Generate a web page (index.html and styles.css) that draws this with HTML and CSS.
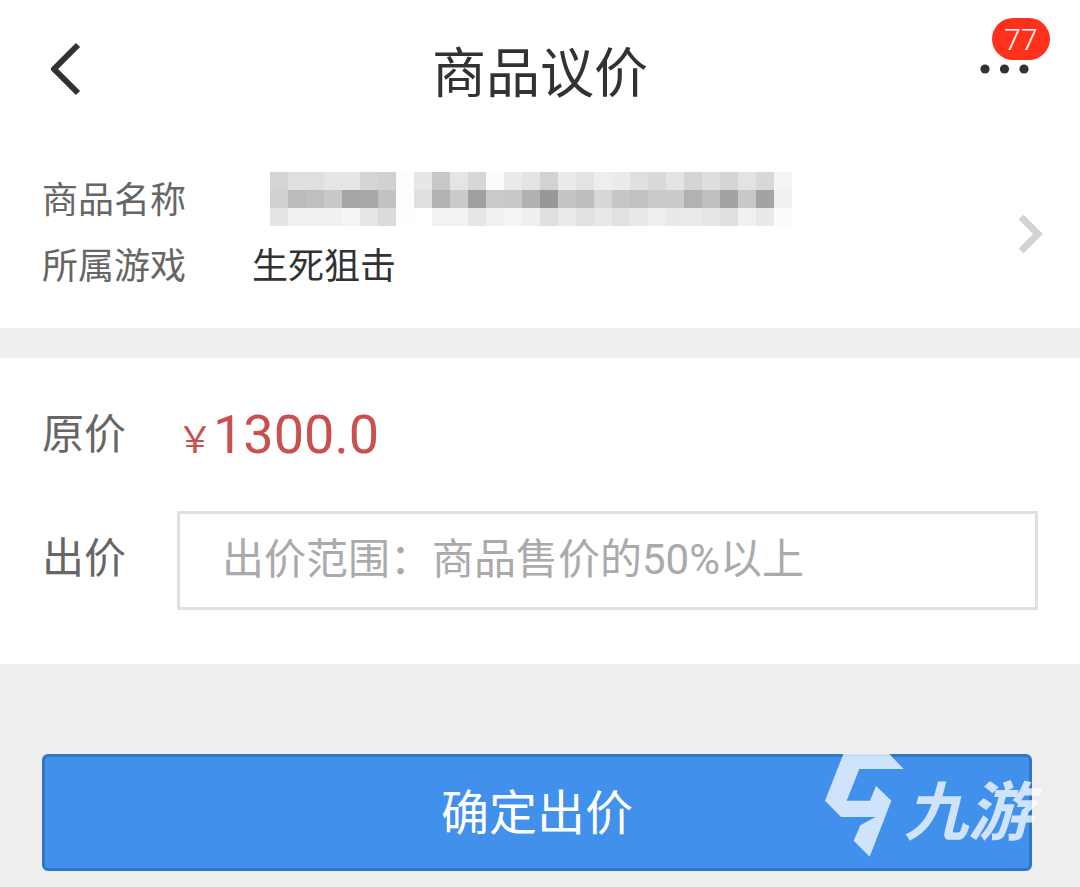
FILE: index.html
```html
<!DOCTYPE html>
<html lang="zh-CN">
<head>
<meta charset="utf-8">
<meta name="viewport" content="width=device-width, initial-scale=1">
<title>商品议价</title>
<link rel="stylesheet" href="styles.css">
</head>
<body>
<header class="topbar">
  <button class="icon-button back" type="button" aria-label="返回">
    <svg width="32" height="54" viewBox="0 0 32 54"><path d="M28 3L4 27L28 51" fill="none" stroke="#303233" stroke-width="6" stroke-linejoin="round"/></svg>
  </button>
  <h1 class="title">商品议价</h1>
  <button class="icon-button more" type="button" aria-label="更多">
    <svg width="50" height="10" viewBox="0 0 50 10" fill="#303233"><circle cx="5" cy="5" r="4.6"/><circle cx="24.500" cy="5" r="4.600"/><circle cx="44" cy="5" r="4.600"/></svg>
    <span class="badge">77</span>
  </button>
</header>
<main class="page">
  <section class="product">
    <dl class="details">
      <dt>商品名称</dt>
      <dd><svg class="mosaic" width="522" height="66" viewBox="0 0 522 66" shape-rendering="crispEdges" aria-hidden="true"></svg></dd>
      <dt>所属游戏</dt>
      <dd>生死狙击</dd>
    </dl>
    <svg class="chevron" width="26" height="40" viewBox="0 0 26 40"><path d="M3 3L20 20L3 37" fill="none" stroke="#d3d3d3" stroke-width="7"/></svg>
  </section>
  <form class="offer" id="offer">
    <div class="row">
      <span class="label">原价</span>
      <span class="price"><span class="currency">￥</span>1300.0</span>
    </div>
    <div class="row">
      <label class="label" for="bid">出价</label>
      <input class="bid" id="bid" type="text" inputmode="decimal" placeholder="出价范围：商品售价的50%以上">
    </div>
  </form>
  <div class="actions">
    <button class="submit" type="submit" form="offer">确定出价</button>
    <div class="watermark">
      <svg width="79" height="104" viewBox="72 69 237 312" fill="#fff"><path d="M128 70H263L308 117H175L137 212H207L225 167L271 212L206 380L158 332L178 286L223 261H120L72 212Z"/></svg>
      <span class="brand">九游</span>
    </div>
  </div>
</main>
<script src="script.js"></script>
</body>
</html>
```
FILE: styles.css
```css
* {
  box-sizing: border-box;
}

body {
  margin: 0;
  min-height: 100vh;
  background: #eee;
  color: #303233;
  font-family: Roboto, "Noto Sans CJK SC", sans-serif;
}

button,
input {
  font: inherit;
}

.topbar {
  display: grid;
  grid-template-columns: 120px 1fr 120px;
  align-items: center;
  height: 144px;
  background: #fff;
}

.title {
  margin: 0;
  padding-top: 6px;
  font-size: 54px;
  font-weight: 400;
  line-height: 80px;
  text-align: center;
}

.icon-button {
  display: flex;
  padding: 0;
  border: 0;
  background: none;
  color: inherit;
}

.back {
  margin: 0 0 6px 50px;
}

.more {
  position: relative;
  justify-self: end;
  margin: 0 50px 6px 0;
}

.badge {
  position: absolute;
  right: -20px;
  bottom: 14px;
  width: 58px;
  padding-top: 2px;
  border-radius: 21px;
  background: #ff311d;
  color: #fff;
  font-size: 30px;
  font-weight: 300;
  line-height: 40px;
  text-align: center;
}

.product {
  display: flex;
  align-items: center;
  justify-content: space-between;
  padding: 24px 36px 28px 42px;
  border-bottom: 30px solid #eee;
  background: #fff;
}

.details {
  display: grid;
  grid-template-columns: 144px 1fr;
  column-gap: 66px;
  margin: 0;
  font-size: 36px;
  line-height: 66px;
}

.details dt {
  color: #666;
}

.details dd {
  margin: 0;
}

.mosaic {
  display: block;
  margin-left: 18px;
}

.offer {
  display: grid;
  gap: 28px;
  padding: 33px 42px 54px;
  background: #fff;
}

.row {
  display: grid;
  grid-template-columns: 84px 1fr;
  column-gap: 51px;
  align-items: center;
  font-size: 42px;
}

.label {
  color: #666;
  line-height: 60px;
  padding-bottom: 4px;
}

.price {
  display: flex;
  align-items: baseline;
  padding: 4px 0 2px;
  color: #c9504f;
  font-size: 54px;
  line-height: 80px;
}

.currency {
  font-size: 36px;
}

.bid {
  width: 100%;
  min-width: 0;
  height: 99px;
  padding: 0 42px 2px;
  border: 3px solid #e0e0e0;
  border-radius: 0;
  background: #fff;
  color: #303233;
}

.bid::placeholder {
  color: #aaa;
  opacity: 1;
}

.actions {
  position: relative;
  padding: 90px 48px 16px 42px;
}

.submit {
  display: block;
  width: 100%;
  height: 117px;
  padding: 0 0 8px;
  border: 3px solid #3077c9;
  border-radius: 6px;
  background: #4190eb;
  color: #fff;
  font-size: 48px;
}

.watermark {
  position: absolute;
  right: 48px;
  bottom: 30px;
  display: flex;
  align-items: center;
  opacity: 0.75;
  pointer-events: none;
}

.brand {
  color: #fff;
  font-size: 64px;
  font-style: italic;
  font-weight: 700;
  line-height: 80px;
  padding-top: 18px;
}
```
FILE: script.js
```js
// Grey levels of the blurred product name, one hex pair per 18px cell.
const rows = [
  "d4 e0 e0 e5 e6 d5 d1 fd e7 c8 e5 d7 fb ea e4 d2 eb e3 ee eb e0 da e4 d4 de d5 e3 d8 f4",
  "d0 bb bf c9 a6 a8 c2 fd df b3 ca 9f ca c9 b1 98 c5 bd d7 c6 c2 ca cb b2 bf a3 c8 a3 f0",
  "e4 f1 f1 f1 f4 e5 db fd ff f2 f2 e6 f0 f5 ef e0 eb e1 e8 e1 e9 ef e9 ea e6 df f0 e9 fb"
];
const mosaic = document.querySelector(".mosaic");
rows.forEach((row, y) => {
  row.split(" ").forEach((level, x) => {
    const cell = document.createElementNS("http://www.w3.org/2000/svg", "rect");
    cell.setAttribute("x", x * 18);
    cell.setAttribute("y", 4 + y * 18);
    cell.setAttribute("width", 18);
    cell.setAttribute("height", 18);
    cell.setAttribute("fill", "#" + level.repeat(3));
    mosaic.append(cell);
  });
});
```
